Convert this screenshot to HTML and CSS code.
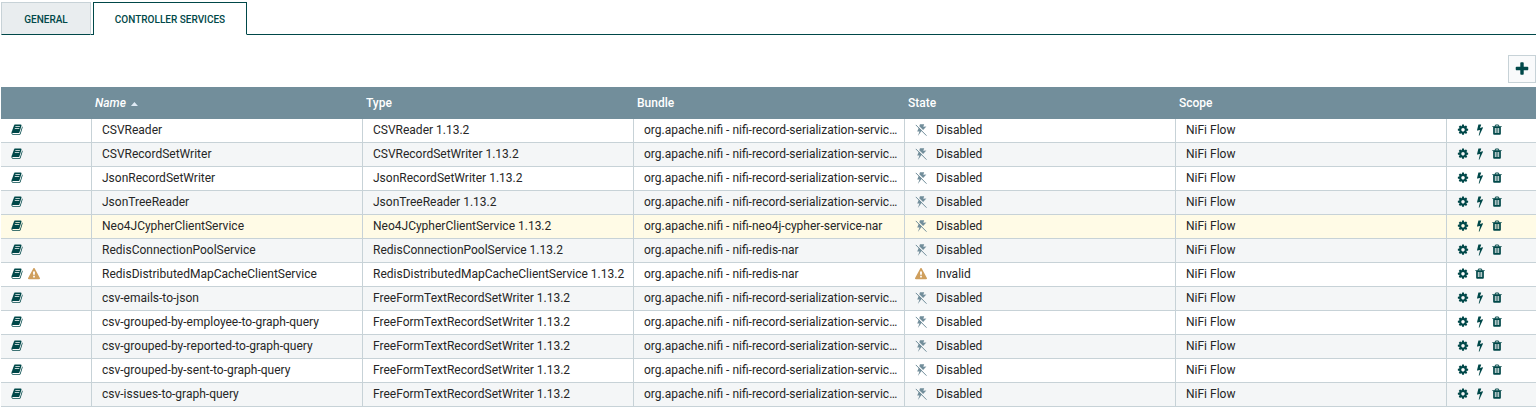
FILE: index.html
```html
<!DOCTYPE html>
<html lang="en">
<head>
<meta charset="utf-8">
<title>Controller Services</title>
<link rel="stylesheet" href="styles.css">
</head>
<body>
<svg class="defs" width="0" height="0">
<symbol id="cog" viewBox="0 50 1792 1792"><path d="M1152 896q0-106-75-181t-181-75-181 75-75 181 75 181 181 75 181-75 75-181zm512-109v222q0 12-8 23t-20 13l-185 28q-19 54-39 91 35 50 107 138 10 12 10 25t-9 23q-27 37-99 108t-94 71q-12 0-26-9l-138-108q-44 23-91 38-16 136-29 186-7 28-36 28h-222q-14 0-24.5-8.5t-11.5-21.5l-28-184q-49-16-90-37l-141 107q-10 9-25 9-14 0-25-11-126-114-165-168-7-10-7-23 0-12 8-23 15-21 51-66.5t54-70.5q-27-50-41-99l-183-27q-13-2-21-12.5t-8-23.5v-222q0-12 8-23t19-13l186-28q14-46 39-92-40-57-107-138-10-12-10-24 0-10 9-23 26-36 98.5-107.5t94.5-71.5q13 0 26 10l138 107q44-23 91-38 16-136 29-186 7-28 36-28h222q14 0 24.5 8.5t11.5 21.5l28 184q49 16 90 37l142-107q9-9 24-9 13 0 25 10 129 119 165 170 7 8 7 22 0 12-8 23-15 21-51 66.5t-54 70.5q26 50 41 98l183 28q13 2 21 12.5t8 23.5z"/></symbol>
<symbol id="trash" viewBox="0 50 1792 1792"><path d="M704 1376v-704q0-14-9-23t-23-9h-64q-14 0-23 9t-9 23v704q0 14 9 23t23 9h64q14 0 23-9t9-23zm256 0v-704q0-14-9-23t-23-9h-64q-14 0-23 9t-9 23v704q0 14 9 23t23 9h64q14 0 23-9t9-23zm256 0v-704q0-14-9-23t-23-9h-64q-14 0-23 9t-9 23v704q0 14 9 23t23 9h64q14 0 23-9t9-23zm-544-992h448l-48-117q-7-9-17-11h-317q-10 2-17 11zm928 32v64q0 14-9 23t-23 9h-96v948q0 83-47 143.5t-113 60.5h-832q-66 0-113-58.5t-47-141.5v-952h-96q-14 0-23-9t-9-23v-64q0-14 9-23t23-9h309l70-167q15-37 54-63t79-26h320q40 0 79 26t54 63l70 167h309q14 0 23 9t9 23z"/></symbol>
<symbol id="bolt" viewBox="0 50 1792 1792"><path d="M1333 566q18 20 7 44l-540 1157q-13 25-42 25-4 0-14-2-17-5-25.5-19t-4.5-30l197-808-406 101q-4 1-12 1-18 0-31-11-18-15-13-39l201-825q4-14 16-23t28-9h328q19 0 32 12.5t13 29.5q0 8-5 18l-171 463 396-98q8-2 12-2 19 0 34 15z"/></symbol>
<symbol id="plus" viewBox="0 0 1792 1792"><path d="M1600 736v192q0 40-28 68t-68 28h-416v416q0 40-28 68t-68 28h-192q-40 0-68-28t-28-68v-416h-416q-40 0-68-28t-28-68v-192q0-40 28-68t68-28h416v-416q0-40 28-68t68-28h192q40 0 68 28t28 68v416h416q40 0 68 28t28 68z"/></symbol>
<symbol id="warning" viewBox="0 0 1792 1792"><path d="M1024 1375v-190q0-14-9.500-23.500t-22.500-9.500h-192q-13 0-22.500 9.500t-9.500 23.500v190q0 14 9.500 23.500t22.500 9.500h192q13 0 22.500-9.500t9.500-23.500zm-2-374l18-459q0-12-10-19-13-11-24-11h-220q-11 0-24 11-10 7-10 21l17 457q0 10 10 16.500t24 6.500h185q14 0 23.500-6.500t10.500-16.500zm-14-934l768 1408q35 63-2 126-17 29-46.500 46t-63.500 17h-1536q-34 0-63.500-17t-46.500-46q-37-63-2-126l768-1408q17-31 47-49t65-18 65 18 47 49z"/></symbol>
<symbol id="book" viewBox="0 60 1792 1792"><path d="M1703 478q40 57 18 129l-275 906q-19 64-76.500 107.500t-122.500 43.500h-923q-77 0-148.500-53.500t-99.500-131.500q-24-67-2-127 0-4 3-27t4-37q1-8-3-21.500t-3-19.500q2-11 8-21t16.500-23.500 16.500-23.500q23-38 45-91.500t30-91.500q3-10 .5-30t-.5-28q3-11 17-28t17-23q21-36 42-92t25-90q1-9-2.500-32t.5-28q4-13 22-30.500t22-22.500q19-26 42.500-84.500t27.500-96.500q1-8-3-25.500t-2-26.500q2-8 9-18t18-23 17-21q8-12 16.500-30.500t15-35 16-36 19.500-32 26.500-23.500 36-11.500 47.500 5.500l-1 3q38-9 51-9h761q74 0 114 56t18 130l-274 906q-36 119-71.500 153.500t-128.500 34.500h-869q-27 0-38 15-11 16-1 43 24 70 144 70h923q29 0 56-15.500t35-41.500l300-987q7-22 5-57 38 15 59 43zm-1064 2q-4 13 2 22.500t20 9.500h608q13 0 25.500-9.500t16.500-22.500l21-64q4-13-2-22.500t-20-9.500h-608q-13 0-25.500 9.500t-16.500 22.500zm-83 256q-4 13 2 22.500t20 9.500h608q13 0 25.500-9.500t16.500-22.500l21-64q4-13-2-22.500t-20-9.500h-608q-13 0-25.500 9.500t-16.500 22.500z"/></symbol>
<symbol id="disabled" viewBox="0 0 12 12"><path d="M5 .3 9.200.2 8.300 2.700 11.400 2.600 8.100 6.100 4.300 2.300Z M3.900 3.400 6.900 6.400 2.800 12 4.500 7.400 2.200 7.400Z"/><path d="M.8.900 11.500 11.700" fill="none" stroke="currentColor" stroke-width="1"/></symbol>
</svg>
<nav class="tabs">
  <div class="tab">GENERAL</div>
  <div class="tab active">CONTROLLER SERVICES</div>
  <div class="rest"></div>
</nav>
<div class="toolbar"><button class="add" aria-label="Add"><svg><use href="#plus"/></svg></button></div>
<main class="table">
  <div class="row head"><div></div><div class="sorted">Name<i class="arrow"></i></div><div>Type</div><div>Bundle</div><div>State</div><div>Scope</div><div></div></div>
</main>
<script src="table.js"></script>
</body>
</html>
```
FILE: styles.css
```css
* { box-sizing: border-box; }
body { margin: 0; padding: 2px 1px 0; width: 1537px; height: 407px; overflow: hidden; background: #fff; color: #262626; font: 12px/15px Roboto, sans-serif; }
svg { display: block; fill: currentColor; }
.defs { position: absolute; }
.tabs { display: flex; height: 33px; color: #004849; font-size: 10px; font-weight: 500; }
.tab { width: 90px; border: 1px solid #c7d2d7; border-bottom-color: #004849; background: #e9edef; text-align: center; line-height: 33px; }
.tab.active { width: 154px; margin-left: 2px; border-color: #004849; border-bottom-color: #fff; background: #fff; position: relative; }
.tab.active::before { content: ""; position: absolute; left: -3px; bottom: -1px; width: 3px; height: 1px; background: #004849; }
.rest { flex: 1; border-bottom: 1px solid #004849; }
.toolbar { display: flex; justify-content: flex-end; padding: 20px 0 4px; }
.add { width: 28px; height: 28px; padding: 0; border: 1px solid #c7d2d7; background: #f9fafb; color: #004849; display: grid; place-items: center; }
.add svg { width: 16px; height: 16px; }
.table { width: 1535px; }
.row { display: grid; grid-template-columns: 91px repeat(5, 271px) 1fr; height: 24px; }
.row > div { min-width: 0; padding: 4px 5px 0 10px; border-right: 1px solid #c7d2d7; border-bottom: 1px solid #c7d2d7; white-space: nowrap; overflow: hidden; text-overflow: ellipsis; }
.row > div:last-child { border-right: 0; }
.row:nth-child(odd) { background: #f4f6f7; }
.row.selected { background: #fffbe6; }
.row.head { height: 32px; background: #728e9b; color: #fff; font-weight: 500; }
.row.head > div { border: 0; padding: 9px 3px 0; }
.row.head .sorted { display: flex; font-style: italic; }
.arrow { margin: 6px 0 0 5px; width: 7px; height: 4px; background: #dfeaf5; clip-path: polygon(50% 0, 100% 100%, 0 100%); }
.row .icons, .row .state { display: flex; }
.icons svg, .state svg { flex: none; width: 12px; height: 12px; margin-top: 1px; color: #004849; }
.icons { gap: 5px; }
.state svg { margin-right: 9px; color: #728e9b; }
.row .icons .warn, .row .state .warn { color: #cf9f5d; }
```
FILE: table.js
```javascript
const serialization = 'org.apache.nifi - nifi-record-serialization-services-nar';
const redis = 'org.apache.nifi - nifi-redis-nar';
const services = [
  ['CSVReader', 'CSVReader', serialization],
  ['CSVRecordSetWriter', 'CSVRecordSetWriter', serialization],
  ['JsonRecordSetWriter', 'JsonRecordSetWriter', serialization],
  ['JsonTreeReader', 'JsonTreeReader', serialization],
  ['Neo4JCypherClientService', 'Neo4JCypherClientService', 'org.apache.nifi - nifi-neo4j-cypher-service-nar'],
  ['RedisConnectionPoolService', 'RedisConnectionPoolService', redis],
  ['RedisDistributedMapCacheClientService', 'RedisDistributedMapCacheClientService', redis, true],
  ['csv-emails-to-json', 'FreeFormTextRecordSetWriter', serialization],
  ['csv-grouped-by-employee-to-graph-query', 'FreeFormTextRecordSetWriter', serialization],
  ['csv-grouped-by-reported-to-graph-query', 'FreeFormTextRecordSetWriter', serialization],
  ['csv-grouped-by-sent-to-graph-query', 'FreeFormTextRecordSetWriter', serialization],
  ['csv-issues-to-graph-query', 'FreeFormTextRecordSetWriter', serialization],
];
const icon = (id, cls = '') => `<svg class="${cls}"><use href="#${id}"/></svg>`;
const table = document.querySelector('.table');
services.forEach(([name, type, bundle, invalid], i) => {
  const warn = icon('warning', 'warn');
  table.insertAdjacentHTML('beforeend', `<div class="row${i === 4 ? ' selected' : ''}">
    <div class="icons">${icon('book')}${invalid ? warn : ''}</div>
    <div>${name}</div><div>${type} 1.13.2</div><div>${bundle}</div>
    <div class="state">${invalid ? warn : icon('disabled')}<span>${invalid ? 'Invalid' : 'Disabled'}</span></div>
    <div>NiFi Flow</div>
    <div class="icons">${icon('cog')}${invalid ? '' : icon('bolt')}${icon('trash')}</div>
  </div>`);
});
```
